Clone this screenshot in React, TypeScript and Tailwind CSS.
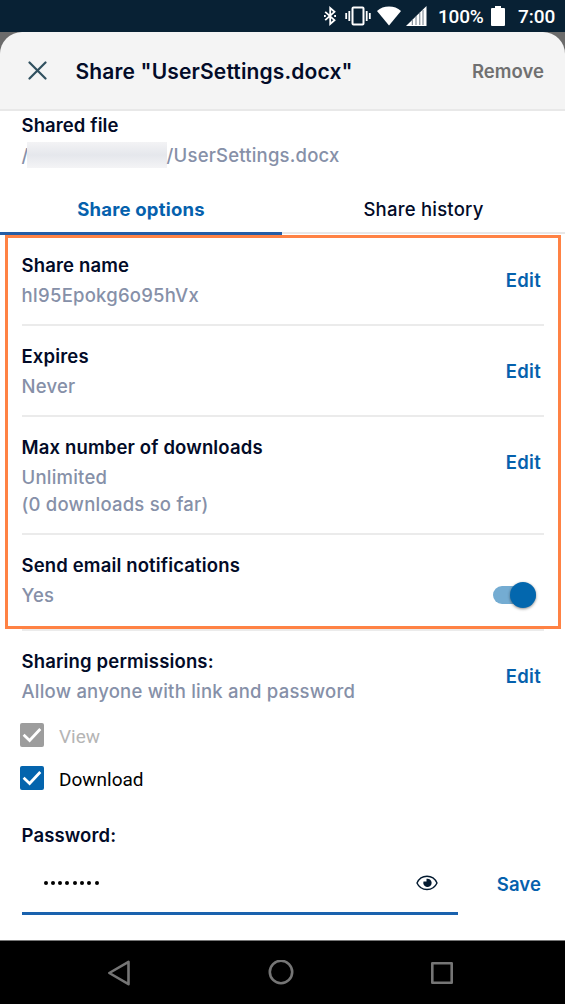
import { useState } from 'react';

const StatusBar = () => (
  <div className="flex h-8 shrink-0 items-center justify-end bg-[#082134] pr-[10px] font-[Roboto,sans-serif] text-[19px] font-medium text-white">
    <svg width="12" height="20" viewBox="0 0 12 20" fill="none" stroke="currentColor" strokeWidth="1.8">
      <path d="M1.200 5.800 10.500 14.200 6.200 18V2L10.500 5.800 1.200 14.200" />
      <path d="M0 10h1.800M10.200 10H12" />
    </svg>
    <svg className="ml-[9px]" width="26" height="20" viewBox="0 0 26 20" fill="none" stroke="currentColor" strokeWidth="2">
      <rect x="7.5" y="1.5" width="11" height="17" rx="1" />
      <path d="M4.3 5v10M21.7 5v10M1.2 7v6M24.8 7v6" strokeWidth="1.8" />
    </svg>
    <svg className="ml-[6px]" width="24" height="20" viewBox="0 0 24 20" fill="currentColor">
      <path d="M12 19.5 0 5Q5 .6 12 .6T24 5Z" />
    </svg>
    <svg className="ml-[5px]" width="21" height="20" viewBox="0 0 21 20" fill="currentColor">
      <path d="M0 20 20.5 0V20Z" />
      <path d="M6.3 14v5M10 10v9M13.8 6.5V19M17 4v15" stroke="#5d6c79" strokeWidth="0.9" />
    </svg>
    <span className="ml-[11px] w-[45px] whitespace-nowrap tracking-[-0.2px]">100%</span>
    <svg className="ml-[8px]" width="14" height="20" viewBox="0 0 14 20" fill="currentColor">
      <path d="M4 0h6v2h3a1 1 0 0 1 1 1v16a1 1 0 0 1-1 1H1a1 1 0 0 1-1-1V3a1 1 0 0 1 1-1h3Z" />
    </svg>
    <span className="ml-[13px] w-[37px] whitespace-nowrap">7:00</span>
  </div>
);

const Header = () => (
  <div className="shrink-0 bg-[#6b6b6b]">
    <div className="flex h-[79px] items-center rounded-t-[22px] border-b-2 border-[#e8e8e8] bg-[#f4f4f4] pr-[21px] pl-7">
      <svg width="19" height="19" viewBox="0 0 19 19" fill="none" stroke="#30505f" strokeWidth="2.2" strokeLinecap="round">
        <path d="m1.5 1.5 16 16M17.5 1.5l-16 16" />
      </svg>
      <h1 className="mt-[2px] ml-[28.5px] text-[21px] font-semibold tracking-[0.15px] text-[#020b28]">Share "UserSettings.docx"</h1>
      <button className="mt-[2px] ml-auto text-[18.5px] font-semibold tracking-[0.05px] text-[#707070]">Remove</button>
    </div>
  </div>
);

const Row = ({ title, lines, className, children }: any) => (
  <div className={`flex items-start border-[#ebebeb] pt-[17px] ${className}`}>
    <div className="flex-1">
      <div className="mb-[3px] font-semibold tracking-[0.15px]">{title}</div>
      {lines.map((line: string) => (
        <div key={line} className="font-medium tracking-[0.22px] text-[#8690a8]">{line}</div>
      ))}
    </div>
    {children}
  </div>
);

const Edit = () => (
  <button className="mt-[15px] mr-[3px] text-[18.5px] font-semibold tracking-[0.3px] text-[#0561ad]">Edit</button>
);

const Check = ({ label, checked, disabled, onChange }: any) => (
  <label className={`flex h-[43px] items-center font-[Roboto,sans-serif] text-[19px] ${disabled ? 'text-[#b5b5b5]' : 'text-black'}`}>
    <input type="checkbox" className="sr-only" checked={checked} disabled={disabled} onChange={onChange} />
    <svg className="-mt-[3px] -ml-[1.5px] mr-[15px]" width="24" height="24" viewBox="0 0 24 24">
      <rect width="24" height="24" rx="2" fill={disabled ? '#9d9d9d' : '#0464ad'} />
      {checked && <path d="m3.6 11.8 6 5.6L20.3 6" fill="none" stroke="#fff" strokeWidth="2.8" />}
    </svg>
    {label}
  </label>
);

const NavBar = () => (
  <div className="flex h-16 shrink-0 items-center border-t border-[#777] bg-black text-[#757575]">
    <svg className="ml-[107px]" width="24" height="26" viewBox="0 0 24 26" fill="none" stroke="currentColor" strokeWidth="2.6" strokeLinejoin="round">
      <path d="M21.5 1.8v22.4L2.3 13Z" />
    </svg>
    <svg className="ml-[137px]" width="26" height="26" viewBox="0 0 26 26" fill="none" stroke="currentColor" strokeWidth="2.6">
      <circle cx="13" cy="12" r="11.2" />
    </svg>
    <svg className="ml-[137px]" width="22" height="26" viewBox="0 0 22 26" fill="none" stroke="currentColor" strokeWidth="2.6" strokeLinejoin="round">
      <rect x="1.3" y="3.3" width="19.4" height="19.4" />
    </svg>
  </div>
);

export default function App() {
  const [notify, setNotify] = useState(true);
  const [download, setDownload] = useState(true);

  return (
    <div className="relative flex h-[1004px] w-[565px] flex-col overflow-hidden bg-white font-[Inter,sans-serif] text-[18.5px] leading-[27px] text-[#020b28]">
      <StatusBar />
      <Header />

      <div className="pr-[21px] pl-[21.5px]">
        <div className="pt-px font-semibold tracking-[0.1px]">Shared file</div>
        <div className="mt-[3px] flex items-center font-medium tracking-[0.2px] text-[#8690a8]">
          <span>/</span>
          <span className="-mt-px -ml-[2px] h-[26px] w-[140px] bg-[#eaebef] bg-linear-to-b from-[#f3f3f5] via-[#e5e7ec] to-[#f4f4f6]" />
          <span>/UserSettings.docx</span>
        </div>
      </div>

      <div className="mt-[16px] flex text-center tracking-[0.22px]">
        <button className="h-[50px] w-[282px] border-b-[3px] border-[#255da5] pt-px font-bold text-[#0561ad]">Share options</button>
        <button className="h-[49px] flex-1 border-b-2 border-[#e8e8e8] pt-px font-medium">Share history</button>
      </div>

      <div className="flex-1 pr-[21px] pl-[21.5px]">
        <Row title="Share name" lines={['hI95Epokg6o95hVx']} className="h-[91px] border-b-2"><Edit /></Row>
        <Row title="Expires" lines={['Never']} className="h-[91px] border-b-2"><Edit /></Row>
        <Row title="Max number of downloads" lines={['Unlimited', '(0 downloads so far)']} className="h-[118px] border-b-2"><Edit /></Row>
        <Row title="Send email notifications" lines={['Yes']} className="h-[96px] border-b-2">
          <button
            role="switch"
            aria-checked={notify}
            onClick={() => setNotify(!notify)}
            className={`mt-[34px] mr-[8px] flex h-[18px] w-[43px] items-center rounded-full ${notify ? 'justify-end bg-[#74acd2]' : 'bg-gray-300'}`}
          >
            <span className="size-[26px] rounded-full bg-[#0367ae] shadow-[0_1px_3px_rgba(0,0,0,0.45)]" />
          </button>
        </Row>
        <Row title="Sharing permissions:" lines={['Allow anyone with link and password']} className="h-[84px]"><Edit /></Row>
        <Check label="View" checked disabled />
        <Check label="Download" checked={download} onChange={() => setDownload(!download)} />

        <div className="mt-[21px] font-semibold tracking-[0.13px]">Password:</div>
        <div className="mt-[3px] flex items-center">
          <div className="flex h-[63px] w-[436px] items-center border-b-[3px] border-[#1a62ae] pt-[2px] pr-[20px] pl-[22px]">
            <div className="flex flex-1 gap-[3.3px]">
              {[...Array(8)].map((_, i) => (
                <span key={i} className="size-[4px] rounded-full bg-black" />
              ))}
            </div>
            <svg width="22" height="16" viewBox="0 0 22 16" fill="none" stroke="#031a30" strokeWidth="1.4">
              <path d="M1 8C3 3.5 6.5 1.2 11 1.2S19 3.5 21 8c-2 4.5-5.5 6.5-10 6.500S3 12.500 1 8Z" />
              <path d="M10.5 3.8V6.5H7.5A4.2 4.2 0 1 0 10.5 3.8Z" fill="#031a30" stroke="none" />
            </svg>
          </div>
          <button className="mt-px mr-[3px] ml-auto text-[18.5px] font-semibold tracking-[0.1px] text-[#0561ad]">Save</button>
        </div>
      </div>

      <NavBar />
      {/* highlighted settings */}
      <div className="pointer-events-none absolute top-[235px] left-[5px] h-[394px] w-[556px] border-3 border-[#ff8244]" />
    </div>
  );
}
